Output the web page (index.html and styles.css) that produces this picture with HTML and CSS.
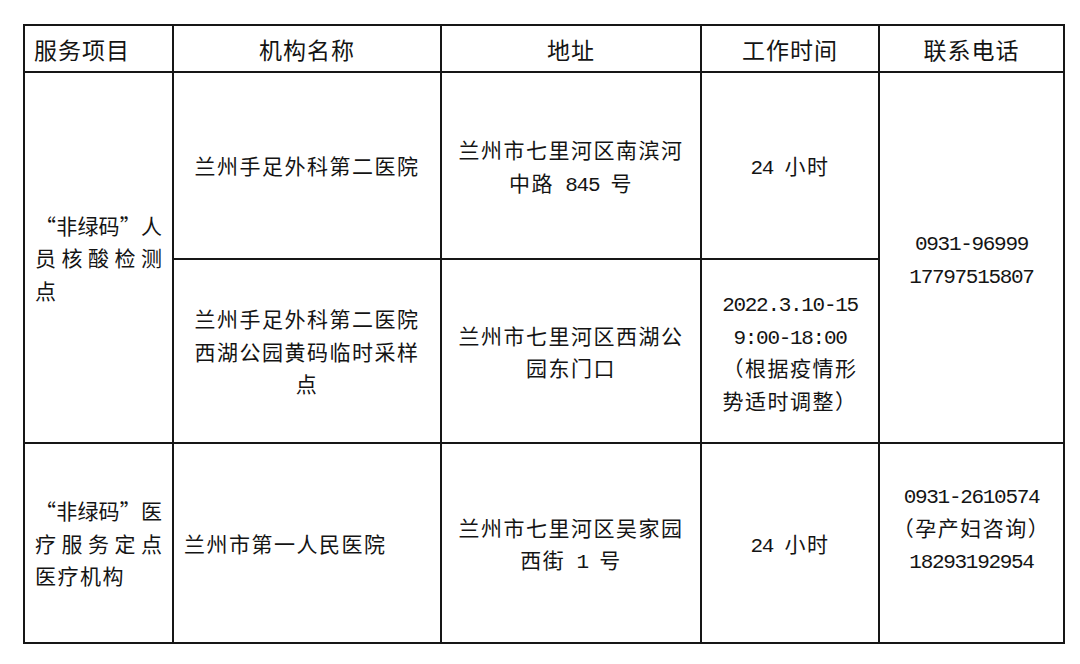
FILE: index.html
```html
<!DOCTYPE html>
<html lang="zh-CN">
<head>
<meta charset="utf-8">
<title>非绿码人员核酸检测点</title>
<link rel="stylesheet" href="styles.css">
</head>
<body>
<table class="sheet">
  <colgroup>
    <col class="c1"><col class="c2"><col class="c3"><col class="c4"><col class="c5">
  </colgroup>
  <thead>
    <tr class="head">
      <th class="left">服务项目</th>
      <th>机构名称</th>
      <th>地址</th>
      <th>工作时间</th>
      <th>联系电话</th>
    </tr>
  </thead>
  <tbody>
    <tr class="r1">
      <td class="cat" rowspan="2">
        <span class="jl">“非绿码”人</span>
        <span class="jl">员核酸检测</span>
        <span class="ll">点</span>
      </td>
      <td>兰州手足外科第二医院</td>
      <td>兰州市七里河区南滨河<br>中路<span class="num"> 845 </span>号</td>
      <td><span class="num">24 </span>小时</td>
      <td class="phone" rowspan="2"><span class="num">0931-96999</span><br><span class="num">17797515807</span></td>
    </tr>
    <tr class="r2">
      <td>兰州手足外科第二医院<br>西湖公园黄码临时采样<br>点</td>
      <td>兰州市七里河区西湖公<br>园东门口</td>
      <td><span class="num">2022.3.10-15</span><br><span class="num">9:00-18:00</span><br>（根据疫情形<br>势适时调整）</td>
    </tr>
    <tr class="r3">
      <td class="cat">
        <span class="jl">“非绿码”医</span>
        <span class="jl">疗服务定点</span>
        <span class="ll">医疗机构</span>
      </td>
      <td class="left name">兰州市第一人民医院</td>
      <td>兰州市七里河区吴家园<br>西街<span class="num"> 1 </span>号</td>
      <td><span class="num">24 </span>小时</td>
      <td class="phone extra"><span class="num">0931-2610574</span><br>（孕产妇咨询）<br><span class="num">18293192954</span></td>
    </tr>
  </tbody>
</table>
</body>
</html>
```

FILE: styles.css
```css
html, body {
  margin: 0;
  padding: 0;
  background: #ffffff;
}

body {
  font-family: "Noto Sans CJK SC", "Noto Sans", sans-serif;
  color: #141414;
}

.sheet {
  margin: 24px 0 0 23px;
  width: 1040px;
  border-collapse: collapse;
  table-layout: fixed;
}

.c1 { width: 149px; }
.c2 { width: 268px; }
.c3 { width: 260px; }
.c4 { width: 178px; }
.c5 { width: 185px; }

.sheet th,
.sheet td {
  border: 2px solid #161616;
  padding: 0 10px;
  text-align: center;
  vertical-align: middle;
  font-weight: 400;
}

.sheet th {
  font-size: 23px;
  letter-spacing: 1px;
  line-height: 30px;
}

.sheet td {
  font-size: 21px;
  letter-spacing: 1.5px;
  line-height: 32.5px;
}

.sheet .left {
  text-align: left;
}

.head th.left {
  padding-left: 9px;
}

.head { height: 47px; }
.r1 { height: 187px; }
.r2 { height: 184px; }
.r3 { height: 200px; }

.cat {
  padding: 0 12px;
  letter-spacing: 0;
}

.cat .jl,
.cat .ll {
  display: block;
  text-align: justify;
  text-align-last: justify;
  letter-spacing: 0;
}

.cat .ll {
  text-align-last: left;
  letter-spacing: 1.5px;
}

.name {
  padding-left: 11px;
}

.num {
  font-family: "Liberation Mono", monospace;
  font-size: 21px;
  letter-spacing: -1.3px;
  line-height: 1;
}

.phone.extra {
  padding-bottom: 32px;
}
```
